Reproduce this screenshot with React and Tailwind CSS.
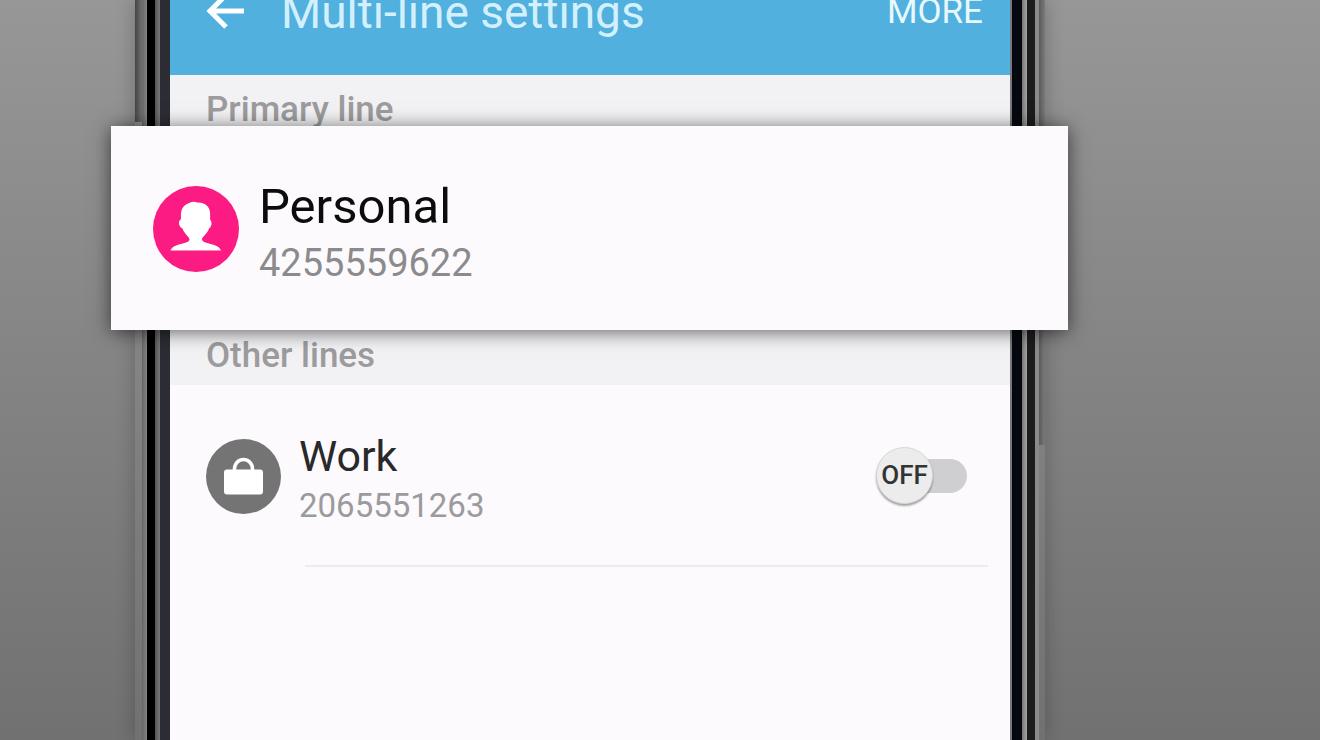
import React, { useState } from 'react';

function PersonIcon() {
  return (
    <svg viewBox="0 0 86 86" className="w-[86px] h-[86px] flex-shrink-0" aria-hidden="true">
      <circle cx="43" cy="43" r="43" fill="#fb1b83" />
      <path
        d="M17.500 64.500C19 61 22 59.500 27 58.200C32 57 36.500 56 36.500 53.500C36.500 50.500 31 48 29.500 42.500C27 41.500 25.500 38.500 26.200 35C27 34 27.800 34 28 32C27.500 25 29 20.500 34 18C37 16 41 14.800 44 16.500C51 16 56.500 20 57 26C57.300 29 57 31 57.200 34C59.500 35.500 58.800 41 56 42.500C54.500 48 49 50.500 49 53.500C49 56 53.500 57 58.500 58.200C63.500 59.500 66.500 61 68 64.500Z"
        fill="#fff"
      />
    </svg>
  );
}

function WorkIcon() {
  return (
    <svg viewBox="0 0 75 75" className="w-[75px] h-[75px] flex-shrink-0" aria-hidden="true">
      <circle cx="37.500" cy="37.500" r="37.500" fill="#757475" />
      <path d="M28.500 33v-3a9 9.500 0 0 1 18 0v3" fill="none" stroke="#fff" strokeWidth="3.500" />
      <rect x="18" y="30.500" width="39" height="25" rx="3" fill="#fff" />
    </svg>
  );
}

function BackIcon() {
  return (
    <svg viewBox="0 0 40 40" className="w-10 h-10" fill="none" stroke="#fff" strokeWidth="5" aria-hidden="true">
      <path d="M39 18H5M21 2L5 18l16 16" />
    </svg>
  );
}

function LineSwitch({ label }) {
  const [on, setOn] = useState(false);

  return (
    <label className="relative flex items-center w-[91px] h-[58px] cursor-pointer">
      <input
        type="checkbox"
        role="switch"
        aria-label={label}
        checked={on}
        onChange={e => setOn(e.target.checked)}
        className="sr-only"
      />
      <span className={`w-full h-[34px] rounded-full ${on ? 'bg-[#8ecae6]' : 'bg-[#cfced0]'}`} />
      <span
        className={`absolute top-0 w-[57px] h-[57px] rounded-full bg-[#ececec] border border-[#d8d8d8]
                    shadow-[0_2px_2px_rgba(0,0,0,0.35)] flex items-center justify-center
                    text-[26px] font-medium text-[#333] ${on ? 'right-0' : 'left-0'}`}
      >
        {on ? 'ON' : 'OFF'}
      </span>
    </label>
  );
}

export default function App() {
  return (
    <div
      className="min-h-screen flex overflow-hidden pl-[135px] pr-[275px]
                 bg-gradient-to-b from-[#979797] to-[#717171] font-[Roboto,sans-serif]"
    >
      {/* Left edge of the phone */}
      <div className="flex w-[35px] flex-shrink-0 shadow-[-2px_0_18px_rgba(0,0,0,0.2)]">
        <span className="w-[7px] h-[122px] bg-gradient-to-r from-[#444] to-[#707070]" />
        <span className="w-[5px] bg-gradient-to-r from-[#666] to-[#858585] ml-auto" />
        <span className="w-2 bg-black" />
        <span className="w-[5px] bg-gradient-to-r from-[#555] to-[#77787c]" />
        <span className="w-[10px] bg-[#2c2d34]" />
      </div>

      {/* Screen */}
      <main className="relative z-10 flex-1 min-w-0 flex flex-col bg-[#fcfafd]">
        <header className="-mt-[50px] h-[125px] flex items-center bg-[#51b0dd] pl-[35px] pr-[27px]">
          <button aria-label="Back" className="flex-shrink-0">
            <BackIcon />
          </button>
          <h1 className="flex-1 ml-9 text-[46px] text-[#d3f0ff] whitespace-nowrap">Multi-line settings</h1>
          <button className="text-[35px] text-[#e8f8ff]">MORE</button>
        </header>

        <h2 className="h-[51px] pt-[17px] pl-9 bg-[#f2f1f3] text-[35px] leading-9 font-medium text-[#9c9b9d]">
          Primary line
        </h2>

        {/* Raised card, wider than the phone */}
        <section
          className="relative -ml-[59px] -mr-[58px] h-[204px] pt-[2px] flex items-center gap-5 pl-[42px]
                     bg-[#fcfafd] shadow-[0_2px_18px_rgba(0,0,0,0.6)]"
        >
          <PersonIcon />
          <div>
            <p className="text-[49px] leading-[68px] text-[#0c0c0c]">Personal</p>
            <p className="text-[38px] leading-[44px] text-[#8b8a8c]">4255559622</p>
          </div>
        </section>

        <h2 className="h-[55px] pt-2 pl-9 bg-[#f2f1f3] text-[35px] leading-9 font-medium text-[#9c9b9d]">
          Other lines
        </h2>

        <section className="h-[180px] pt-[2px] flex items-center gap-[18px] pl-9 pr-[43px]">
          <WorkIcon />
          <div className="flex-1">
            <p className="text-[43px] leading-[60px] text-[#29282a]">Work</p>
            <p className="text-[33px] leading-10 text-[#9b9a9c]">2065551263</p>
          </div>
          <LineSwitch label="Work line" />
        </section>
        <hr className="ml-[135px] mr-[22px] border-t-2 border-[#ececee]" />
      </main>

      {/* Right edge of the phone */}
      <div className="flex w-[35px] flex-shrink-0 shadow-[2px_0_18px_rgba(0,0,0,0.2)]">
        <span className="w-[2px] bg-[#77777b]" />
        <span className="w-[10px] bg-[#05080f]" />
        <span className="w-[5px] bg-gradient-to-r from-[#777] to-[#a5a5a5]" />
        <span className="w-2 bg-[#1c1c1c]" />
        <span className="w-1 bg-[#8a8a8a]" />
        <span className="w-[6px] h-[445px] bg-gradient-to-r from-[#5a5a5a] to-[#7a7a7a]" />
      </div>
    </div>
  );
}
